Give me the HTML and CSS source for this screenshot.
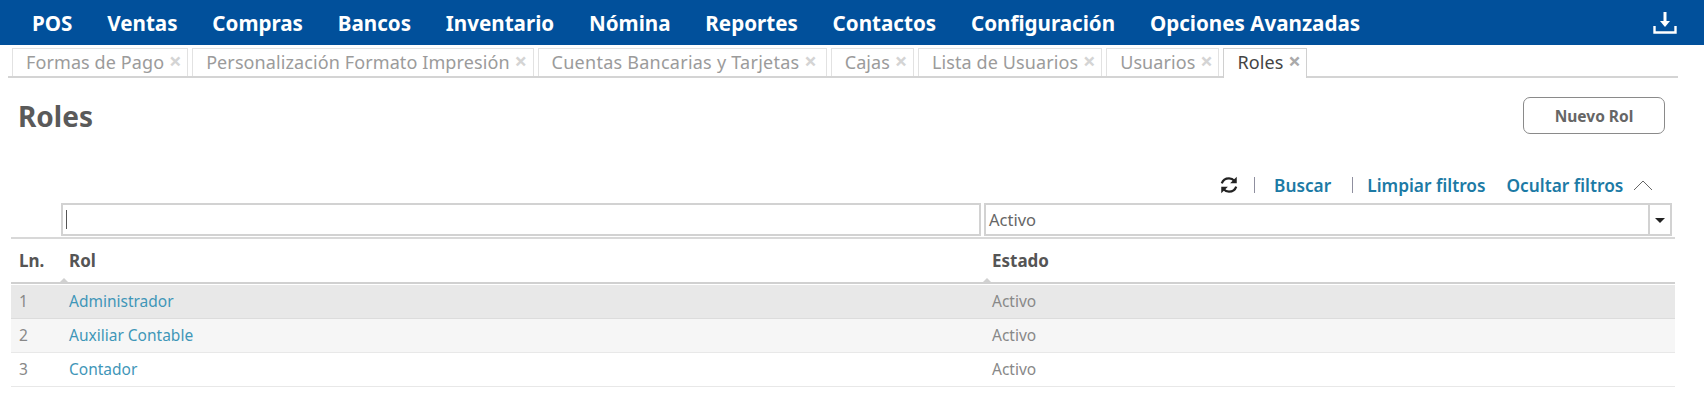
FILE: index.html
```html
<!DOCTYPE html>
<html lang="es">
<head>
  <meta charset="UTF-8">
  <meta name="viewport" content="width=device-width, initial-scale=1.0">
  <title>Roles</title>
  <link rel="stylesheet" href="styles.css">
</head>
<body>
  <nav class="top-nav">
    <ul class="nav-list">
      <li>POS</li>
      <li>Ventas</li>
      <li>Compras</li>
      <li>Bancos</li>
      <li>Inventario</li>
      <li>Nómina</li>
      <li>Reportes</li>
      <li>Contactos</li>
      <li>Configuración</li>
      <li>Opciones Avanzadas</li>
    </ul>
    <svg class="download-icon" width="24" height="24" viewBox="0 0 24 24" aria-hidden="true">
      <path d="M12 1v11" fill="none" stroke="#fff" stroke-width="3"/>
      <path d="M7 10h10l-5 6z" fill="#fff"/>
      <path d="M1.5 15v6.5h21V15" fill="none" stroke="#fff" stroke-width="2.4"/>
    </svg>
  </nav>

  <div class="tabs">
    <div class="tab">Formas de Pago <span class="tab-close">×</span></div>
    <div class="tab">Personalización Formato Impresión <span class="tab-close">×</span></div>
    <div class="tab tab-cuentas">Cuentas Bancarias y Tarjetas <span class="tab-close">×</span></div>
    <div class="tab">Cajas <span class="tab-close">×</span></div>
    <div class="tab">Lista de Usuarios <span class="tab-close">×</span></div>
    <div class="tab">Usuarios <span class="tab-close">×</span></div>
    <div class="tab active">Roles <span class="tab-close">×</span></div>
  </div>

  <div class="title-row">
    <h1>Roles</h1>
    <button class="btn-new">Nuevo Rol</button>
  </div>

  <div class="toolbar">
    <svg class="refresh-icon" width="20" height="20" viewBox="0 0 18 18" aria-hidden="true">
      <path d="M2.5 7.5C3.5 4.5 6 3 9 3c2.2 0 3.7.9 5 2.4" fill="none" stroke="#222" stroke-width="2"/>
      <path d="M16 1.5v6h-6z" fill="#222"/>
      <path d="M15.5 10.5C14.5 13.5 12 15 9 15c-2.2 0-3.7-.9-5-2.4" fill="none" stroke="#222" stroke-width="2"/>
      <path d="M2 16.5v-6h6z" fill="#222"/>
    </svg>
    <span class="sep sep-one"></span>
    <a class="tool-link link-search">Buscar</a>
    <span class="sep sep-two"></span>
    <a class="tool-link link-clear">Limpiar filtros</a>
    <a class="tool-link link-hide">Ocultar filtros</a>
    <svg class="chevron" width="20" height="11" viewBox="0 0 20 11" aria-hidden="true">
      <path d="M1 10l9-9 9 9" fill="none" stroke="#666" stroke-width="1"/>
    </svg>
  </div>

  <div class="filters">
    <div class="filter-input filter-rol"><span class="caret"></span></div>
    <div class="filter-input filter-estado">
      <span class="filter-value">Activo</span>
      <span class="select-arrow"></span>
    </div>
  </div>

  <div class="grid-table">
    <div class="grid-row grid-head">
      <div class="cell-ln">Ln.</div>
      <div class="sortable">Rol</div>
      <div class="sortable">Estado</div>
    </div>
    <div class="grid-row row-selected">
      <div class="cell-ln">1</div>
      <div><a>Administrador</a></div>
      <div>Activo</div>
    </div>
    <div class="grid-row row-hover">
      <div class="cell-ln">2</div>
      <div><a>Auxiliar Contable</a></div>
      <div>Activo</div>
    </div>
    <div class="grid-row">
      <div class="cell-ln">3</div>
      <div><a>Contador</a></div>
      <div>Activo</div>
    </div>
  </div>
</body>
</html>
```

FILE: styles.css
```css
body {
  margin: 0;
  font-family: 'Noto Sans', 'DejaVu Sans', sans-serif;
  background: #fff;
  color: #555;
  overflow: hidden;
}

.top-nav {
  height: 45px;
  background: #01509b;
  display: flex;
  justify-content: space-between;
  align-items: center;
  padding: 0 27px 0 32px;
}

.nav-list {
  list-style: none;
  display: flex;
  gap: 34.8px;
  margin: 0;
  padding: 0;
  color: #fff;
  font-size: 20.6px;
  font-weight: 700;
}

.tabs {
  display: flex;
  gap: 4px;
  margin: 3px 26px 0 8px;
  padding-left: 4px;
  height: 28px;
  border-bottom: 2px solid #d4d4d4;
}

.tab {
  box-sizing: border-box;
  height: 28px;
  padding: 0 5.5px 0 13px;
  border: 1px solid #e2e2e2;
  border-bottom: none;
  font-size: 18px;
  letter-spacing: 0.1px;
  line-height: 27px;
  color: #9b9b9b;
  white-space: nowrap;
}

.tab-cuentas {
  letter-spacing: 0.25px;
  padding-right: 8.5px;
}

.tab-close {
  color: #d4d4d4;
  font-size: 22px;
  font-weight: 700;
  line-height: 1;
}

.tab.active {
  height: 30px;
  background: #fff;
  color: #444;
  border-color: #d0d0d0;
}

.tab.active .tab-close {
  color: #aaa;
}

.title-row {
  display: flex;
  justify-content: space-between;
  align-items: flex-start;
  padding: 19px 39px 0 18px;
  height: 53px;
}

h1 {
  margin: 3px 0 0;
  font-size: 28px;
  font-weight: 700;
  line-height: 33px;
  color: #5a5a5a;
}

.btn-new {
  width: 142px;
  height: 37px;
  background: #fff;
  border: 1px solid #8a8a8a;
  border-radius: 7px;
  font-family: inherit;
  font-size: 15.5px;
  font-weight: 700;
  color: #666;
}

.toolbar {
  display: flex;
  align-items: center;
  height: 24px;
  margin-top: 23px;
  padding-left: 1219px;
}

.refresh-icon {
  flex: none;
}

.sep {
  width: 1px;
  height: 16px;
  background: #8f8f9f;
}

.sep-one {
  margin-left: 15px;
}

.tool-link {
  color: #1c7aa5;
  font-size: 17.3px;
  font-weight: 600;
  white-space: nowrap;
}

.link-search {
  margin-left: 19px;
}

.sep-two {
  margin-left: 21px;
}

.link-clear {
  margin-left: 14px;
}

.link-hide {
  margin-left: 21px;
}

.chevron {
  margin-left: 10px;
}

.filters {
  display: flex;
  gap: 3px;
  margin: 6px 32px 0 61px;
}

.filter-input {
  box-sizing: border-box;
  height: 33px;
  border: 2px solid #d2d2d2;
  background: #fff;
  display: flex;
  align-items: center;
}

.filter-rol {
  width: 920px;
  padding-left: 3px;
}

.caret {
  width: 1px;
  height: 19px;
  background: #555;
}

.filter-estado {
  flex: 1;
  justify-content: space-between;
  padding-left: 3px;
  font-size: 16.5px;
  color: #666;
}

.select-arrow {
  box-sizing: border-box;
  width: 22px;
  height: 29px;
  border-left: 2px solid #d2d2d2;
  position: relative;
}

.select-arrow::after {
  content: "";
  position: absolute;
  left: 5px;
  top: 13px;
  border-left: 5px solid transparent;
  border-right: 5px solid transparent;
  border-top: 5px solid #222;
}

.grid-table {
  margin: 1px 29px 0 11px;
  border-top: 2px solid #d8d8d8;
}

.grid-row {
  display: grid;
  grid-template-columns: 58px 923px 1fr;
  height: 33px;
  line-height: 32px;
  border-bottom: 1px solid #e8e8e8;
  font-size: 15.5px;
  color: #888;
}

.grid-row a {
  color: #3f96b8;
}

.cell-ln {
  padding-left: 8px;
}

.grid-head {
  height: 43px;
  line-height: 43px;
  border-bottom: 2px solid #d0d0d0;
  font-weight: 700;
  color: #555;
  font-size: 17px;
  margin-bottom: 1px;
}

.sortable {
  position: relative;
}

.sortable::after {
  content: "";
  position: absolute;
  left: -9px;
  bottom: 0;
  border-left: 4px solid transparent;
  border-right: 4px solid transparent;
  border-bottom: 4px solid #d0d0d0;
}

.row-selected {
  background: #e8e8e8;
  border-bottom-color: #dcdcdc;
}

.row-hover {
  background: #f6f6f6;
}
```
